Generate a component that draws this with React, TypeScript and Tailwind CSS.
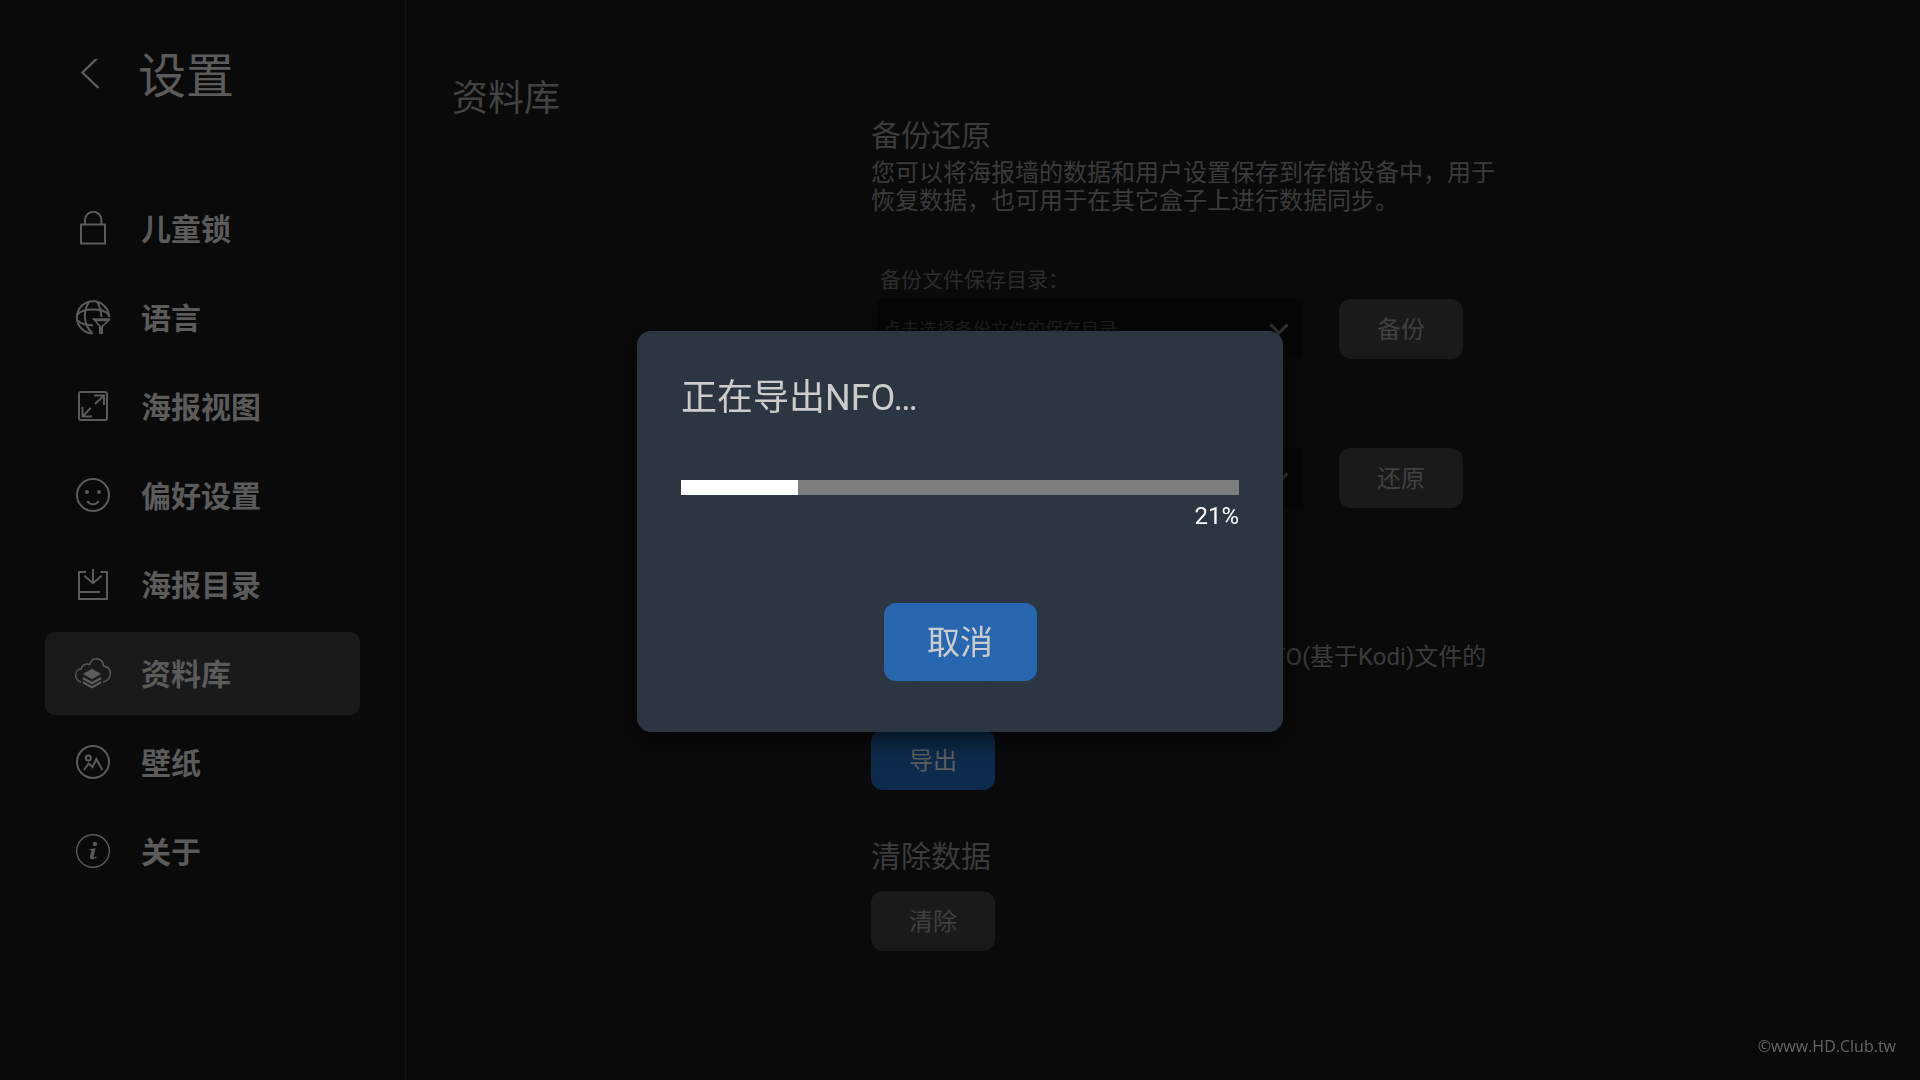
import React from 'react';

interface NavItem {
  name: string;
  icon: React.ReactNode;
  active?: boolean;
}

const Icon: React.FC<{ children: React.ReactNode }> = ({ children }) => (
  <svg
    viewBox="0 0 37 37"
    className="size-[37px] shrink-0"
    fill="none"
    stroke="currentColor"
    strokeWidth="2"
    aria-hidden="true"
  >
    {children}
  </svg>
);

const LockIcon = () => (
  <Icon>
    <rect x="6" y="14.500" width="24" height="19" />
    <path d="M10 14V10a8.2 8.2 0 0 1 16.4 0v4" />
  </Icon>
);

const LanguageIcon = () => (
  <Icon>
    <path d="M17.5 34.4A16.1 16.1 0 1 1 34.1 18.3" />
    <path d="M14 3C8 12 8 26 17.5 34.2M22 3c3.2 4.5 4.3 9.5 4.3 15" />
    <path d="M2.5 15.5C8 8.8 28 8.8 33.5 15.5M2.5 21.5C6 25 12 26.3 18 26.3" />
    <path d="M17.5 20H35M20 21.5l6 7 7.5-7z" strokeWidth="1.6" />
    <path d="M24 27.5h4V35h-4z" fill="currentColor" stroke="none" />
  </Icon>
);

const ViewIcon = () => (
  <Icon>
    <rect x="4" y="4" width="28" height="28" rx="2" />
    <path d="M19 7.5h10V17M29 7.5L20 16" />
    <path d="M7.5 18.7v9.8H17M7.5 28.5L15.7 20" />
  </Icon>
);

const SmileIcon = () => (
  <Icon>
    <circle cx="18" cy="18" r="16" />
    <circle cx="12" cy="15" r="2" fill="currentColor" stroke="none" />
    <circle cx="24" cy="15" r="2" fill="currentColor" stroke="none" />
    <path d="M12.3 24c3 4.4 8.4 4.4 11.4 0" />
  </Icon>
);

const FolderIcon = () => (
  <Icon>
    <path d="M11 6H4v27h28V6h-6.5M4 26h21" />
    <path d="M18 3v14M9.3 9.7L18 17.2l8.7-7.5" />
  </Icon>
);

const LibraryIcon = () => (
  <Icon>
    <path
      d="M6 27C2.8 26 .7 23.2 .7 20c0-3.4 2.4-6 5.7-6.2C6.6 10.2 10.6 7.8 14.7 9.6 15.7 6 18.2 3.7 21.3 3.7c4 0 7.2 3 7.4 7.3 4 .8 6.7 3.8 6.7 7.7 0 4-2.8 7.5-7.4 8"
      strokeWidth="1.4"
    />
    <g fill="currentColor" stroke="none">
      <path d="M17 13.7l9.2 5.3L17 24.3 7.8 19z" />
      <path d="M7.8 21.8L17 26.700l9.200-4.900v2.600L17 29.400l-9.200-5z" />
      <path d="M7.8 26L17 30.900l9.200-4.900v2.600L17 33.600l-9.200-5z" />
    </g>
  </Icon>
);

const WallpaperIcon = () => (
  <Icon>
    <circle cx="18" cy="18" r="16" />
    <circle cx="13.3" cy="14" r="2.5" />
    <path d="M9 26l4.7-6.5 3.8 3.5 3.8-8L27.3 26" />
  </Icon>
);

const AboutIcon = () => (
  <Icon>
    <circle cx="18" cy="18" r="16.3" strokeWidth="1.4" />
    <g fill="currentColor" stroke="none">
      <circle cx="20" cy="11" r="2.2" />
      <path d="M14.3 16.2l6.3-1-2.1 8.3c-.2 1 .6 1.2 1.5.6l1.5-.7.3.8c-1.6 1.5-3.3 2.1-4.8 2.1-1.8 0-2.4-1-2-2.7l1.4-5.4c.2-.8-.3-1.1-2.1-1.2z" />
    </g>
  </Icon>
);

const navItems: NavItem[] = [
  { name: '儿童锁', icon: <LockIcon /> },
  { name: '语言', icon: <LanguageIcon /> },
  { name: '海报视图', icon: <ViewIcon /> },
  { name: '偏好设置', icon: <SmileIcon /> },
  { name: '海报目录', icon: <FolderIcon /> },
  { name: '资料库', icon: <LibraryIcon />, active: true },
  { name: '壁纸', icon: <WallpaperIcon /> },
  { name: '关于', icon: <AboutIcon /> }
];

const Sidebar: React.FC = () => (
  <aside className="w-[406px] shrink-0 border-r border-[#131313] pl-[45px] pr-[45px] text-[#5b5b5b]">
    <header className="flex items-center pt-[41px] pl-[30px]">
      <button type="button" aria-label="返回" className="mr-[27px]">
        <svg
          viewBox="0 0 36 36"
          className="size-9"
          fill="none"
          stroke="currentColor"
          strokeWidth="2.4"
          aria-hidden="true"
        >
          <path d="M23.5 -2L7.5 13.500l16 15.500" className="overflow-visible" />
        </svg>
      </button>
      <h1 className="text-5xl leading-[72px]">设置</h1>
    </header>

    <nav className="mt-[74px] flex flex-col gap-1.5">
      {navItems.map((item) => (
        <a
          key={item.name}
          href="#"
          aria-current={item.active ? 'page' : undefined}
          className={`flex h-[83px] items-center gap-[29px] rounded-[10px] pl-[30px] text-3xl font-bold ${
            item.active ? 'bg-[#191a1c]' : ''
          }`}
        >
          {item.icon}
          <span className="pt-0.5">{item.name}</span>
        </a>
      ))}
    </nav>
  </aside>
);

const ActionButton: React.FC<{ label: string; primary?: boolean }> = ({ label, primary }) => (
  <button
    type="button"
    className={`h-[60px] w-[124px] shrink-0 rounded-xl pt-0.5 text-2xl ${
      primary ? 'bg-[#0d2b4d] text-[#5f5f5f]' : 'bg-[#1a1a1a] text-[#404040]'
    }`}
  >
    {label}
  </button>
);

interface PathRowProps {
  id: string;
  label: string;
  placeholder: string;
  action: string;
}

const PathRow: React.FC<PathRowProps> = ({ id, label, placeholder, action }) => (
  <div className="pl-1.5">
    <label htmlFor={id} className="block pl-[3px] text-[21px] leading-[38px] text-[#2c2c2c]">
      {label}
    </label>
    <div className="flex gap-9">
      <div className="relative w-[426px]">
        <select
          id={id}
          className="h-[60px] w-full appearance-none bg-[#050706] pt-0.5 pl-1.5 pr-12 text-lg text-[#1e1f1f]"
        >
          <option>{placeholder}</option>
        </select>
        <svg
          viewBox="0 0 20 12"
          className="pointer-events-none absolute right-3.5 top-6 h-3 w-5"
          fill="none"
          stroke="#333333"
          strokeWidth="3"
          aria-hidden="true"
        >
          <path d="M1.5 1.5L10 10l8.5-8.5" />
        </svg>
      </div>
      <ActionButton label={action} />
    </div>
  </div>
);

const LibraryPanel: React.FC = () => (
  <main className="flex flex-1 pl-[46px] text-[#3b3b3b]">
    <h2 className="w-[419px] shrink-0 pt-[72px] text-4xl leading-[54px] text-[#424242]">资料库</h2>

    <div className="w-full max-w-[632px] pt-[116px]">
      <section>
        <h3 className="text-3xl leading-10">备份还原</h3>
        <p className="mt-[3px] text-2xl leading-7">
          您可以将海报墙的数据和用户设置保存到存储设备中，用于恢复数据，也可用于在其它盒子上进行数据同步。
        </p>
        <div className="mt-[46px] flex flex-col gap-[51px]">
          <PathRow
            id="backup-dir"
            label="备份文件保存目录："
            placeholder="点击选择备份文件的保存目录"
            action="备份"
          />
          <PathRow
            id="backup-file"
            label="备份文件路径："
            placeholder="点击选择备份文件"
            action="还原"
          />
        </div>
      </section>

      <section className="mt-[92px]">
        <h3 className="text-3xl leading-10">导出NFO</h3>
        <p className="mt-[3px] mb-[31px] text-2xl leading-7">
          将海报墙中影片对应的海报数据，以NFO(基于Kodi)文件的形式保存在相应的目录中
        </p>
        <ActionButton label="导出" primary />
      </section>

      <section className="mt-[47px]">
        <h3 className="mb-3.5 text-3xl leading-10">清除数据</h3>
        <ActionButton label="清除" />
      </section>
    </div>
  </main>
);

const ExportDialog: React.FC<{ progress: number }> = ({ progress }) => (
  <div className="fixed inset-0 flex items-center justify-center pb-[18px]">
    <div
      role="dialog"
      aria-modal="true"
      aria-labelledby="export-title"
      className="flex w-[646px] flex-col rounded-[14px] bg-[#2c3743]/98 px-11 pt-10 pb-[51px] shadow-[0_8px_24px_rgba(0,0,0,0.6)]"
    >
      <h2 id="export-title" className="text-4xl leading-[54px] text-[#cccccc]">
        正在导出NFO…
      </h2>
      <div
        role="progressbar"
        aria-label="导出进度"
        aria-valuenow={progress}
        aria-valuemin={0}
        aria-valuemax={100}
        className="mt-[55px] h-[15px] bg-[#7c7d80]"
      >
        <div className="h-full bg-white" style={{ width: `${progress}%` }} />
      </div>
      <p className="mt-[5px] text-right text-2xl text-white">{progress}%</p>
      <button
        type="button"
        className="mt-[71px] h-[78px] w-[153px] self-center rounded-xl bg-[#2767b0] pt-0.5 text-[33px] text-[#cccccc]"
      >
        取消
      </button>
    </div>
  </div>
);

const App: React.FC = () => {
  return (
    <div className="flex min-h-screen bg-[#0a0a0a] font-['Roboto','Noto_Sans_CJK_SC',sans-serif]">
      <Sidebar />
      <LibraryPanel />
      <ExportDialog progress={21} />
      <footer className="fixed right-6 bottom-[22px] font-['Open_Sans',sans-serif] text-base leading-6 text-[#666666]">
        ©www.HD.Club.tw
      </footer>
    </div>
  );
};

export default App;
